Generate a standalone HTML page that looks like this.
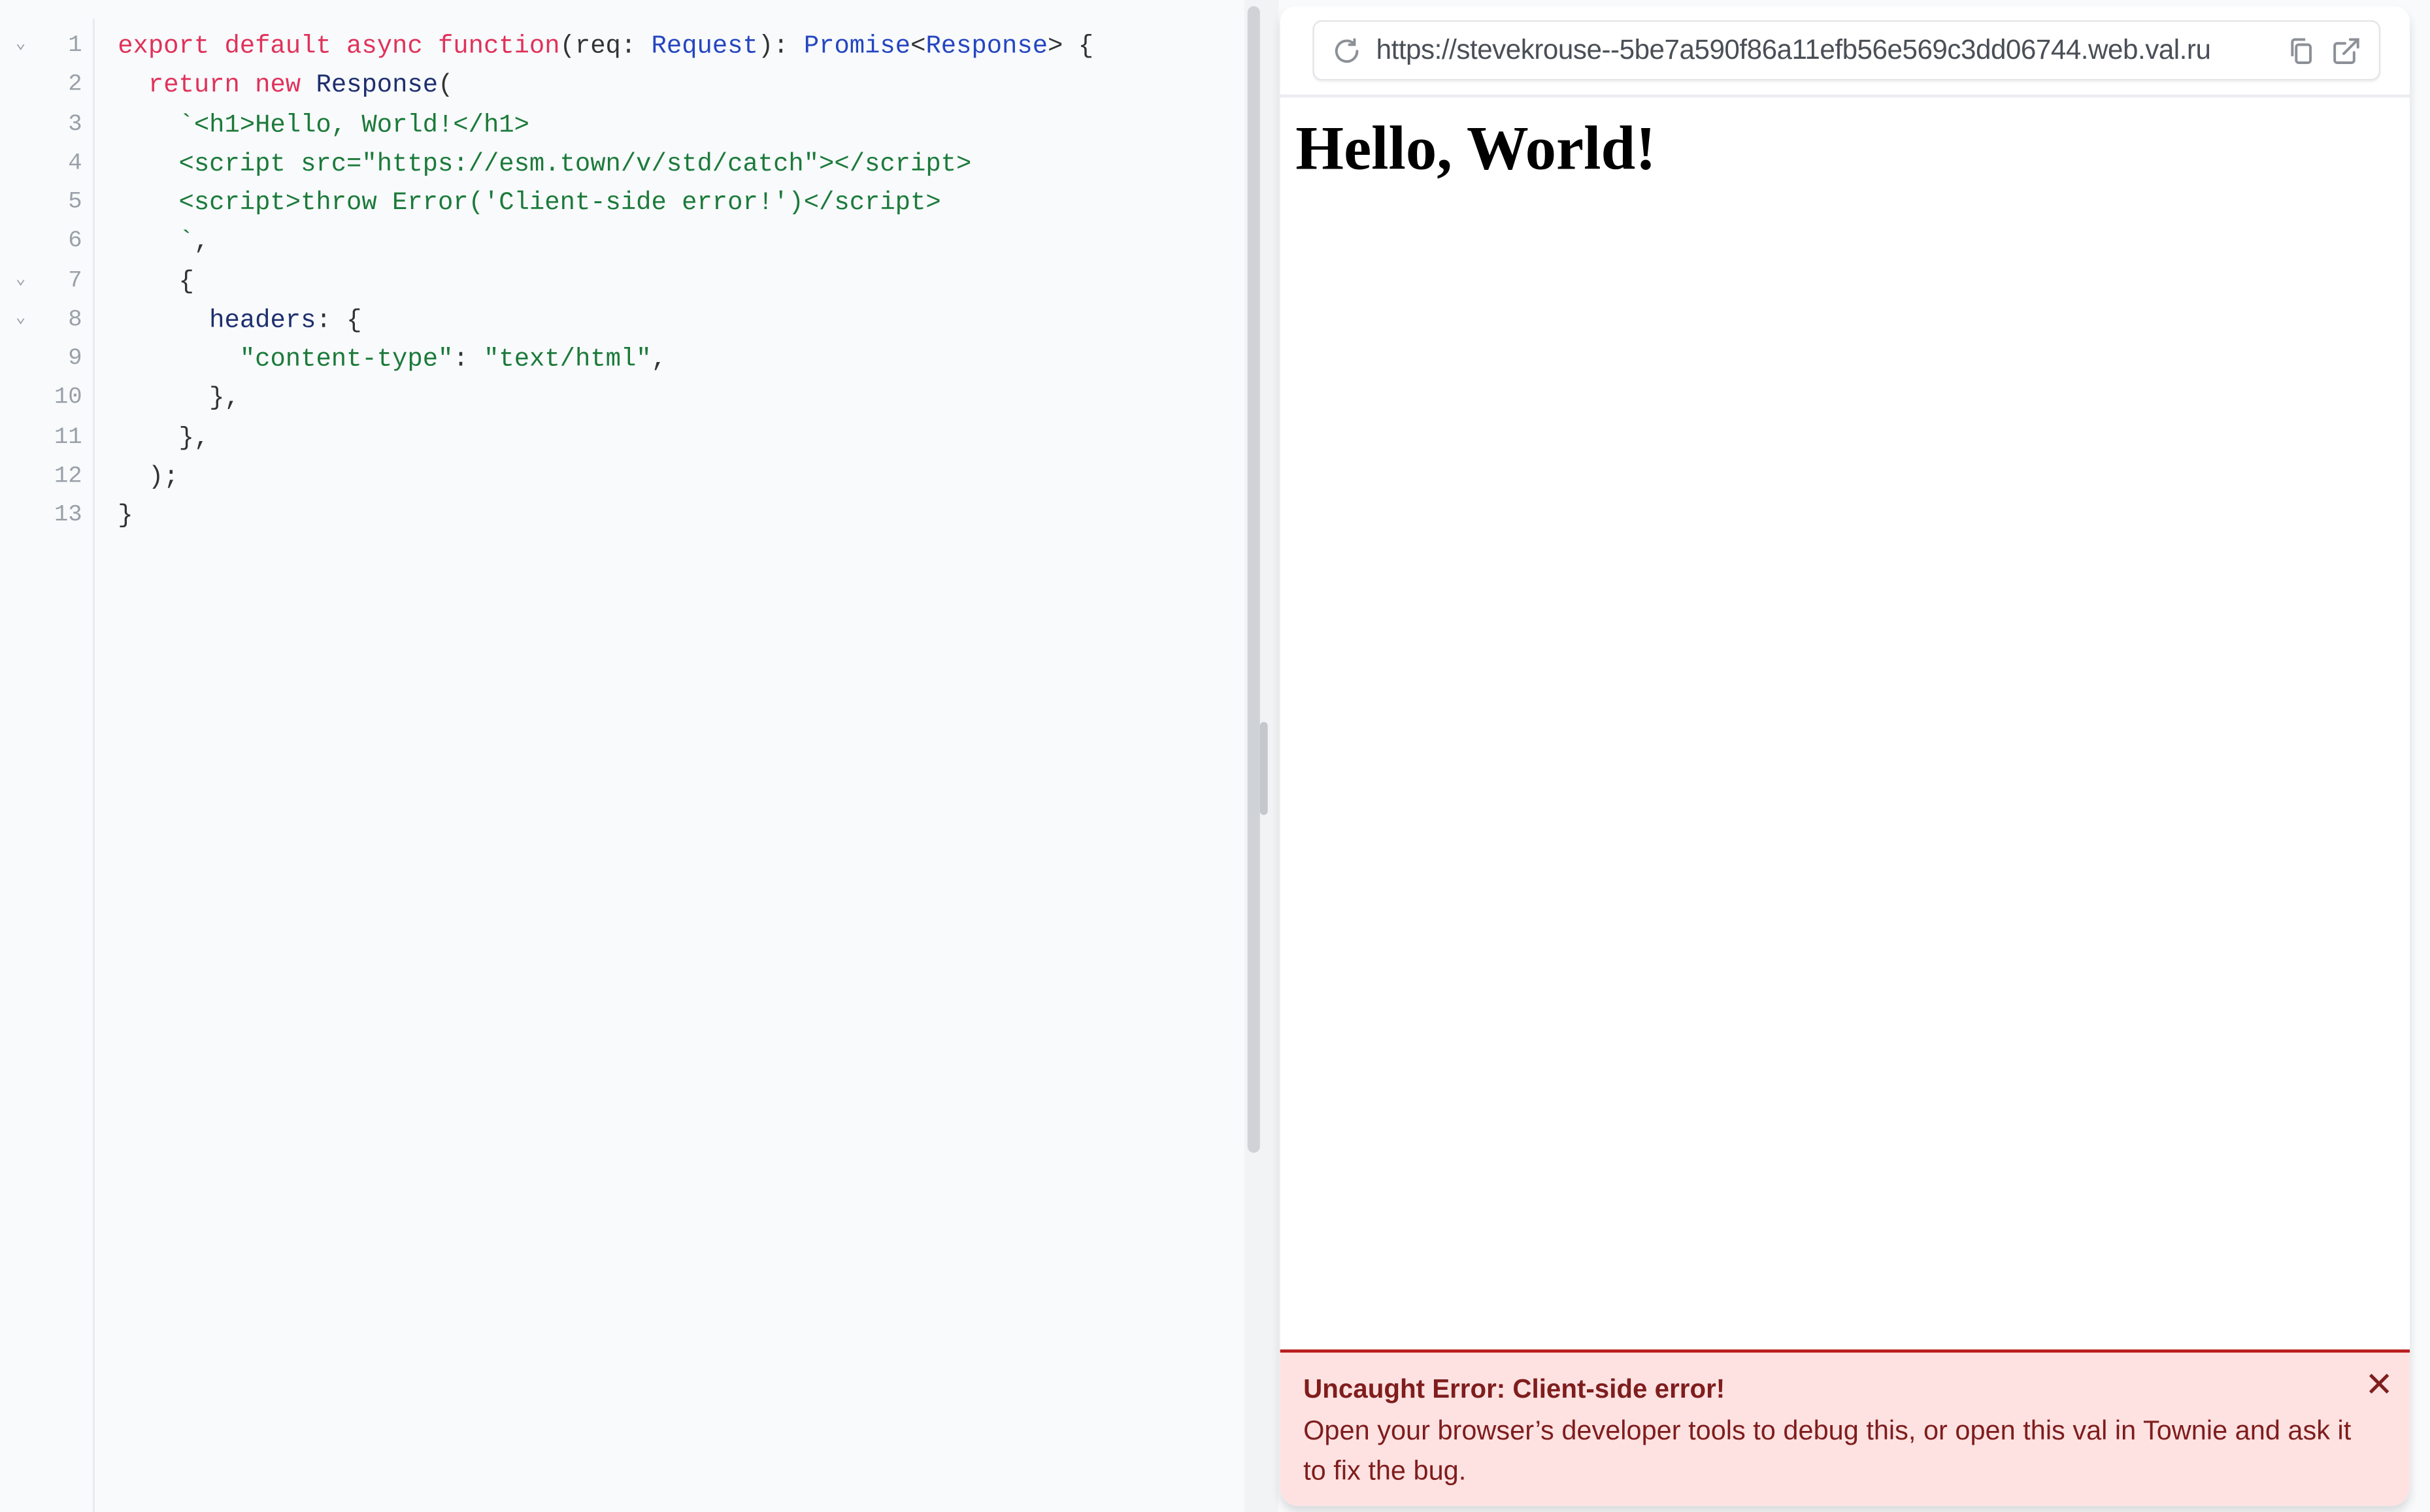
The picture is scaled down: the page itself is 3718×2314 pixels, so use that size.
<!DOCTYPE html>
<html><head><meta charset="utf-8"><style>
html,body{margin:0;padding:0;width:3718px;height:2314px;overflow:hidden;background:#f8fafc}
#w{position:absolute;left:0;top:0;width:1568px;height:976px;transform:scale(2.37117);transform-origin:0 0;background:#f8fafc}
.code{position:absolute;left:0;top:17px;font-family:"Liberation Mono",monospace;font-size:16.4px;line-height:25.25px}
.ln{position:absolute;left:0;width:53px;text-align:right;color:#9aa0a8;font-size:15px}
.cl{position:absolute;left:76px;white-space:pre}
.fold{position:absolute;left:10px;color:#9aa0a8;font-size:11px}
.k{color:#e0325a}.t{color:#2546c0}.n{color:#1e2f6e}.s{color:#1c7a3a}.p{color:#333}
</style></head><body><div id="w">
<div style="position:absolute;left:60px;top:12px;width:1px;height:964px;background:#e4e7eb"></div>
<div class="code"><div style="position:relative;height:329px"><div class="ln" style="top:0">1</div><div class="ln" style="top:25.25px">2</div><div class="ln" style="top:50.5px">3</div><div class="ln" style="top:75.75px">4</div><div class="ln" style="top:101px">5</div><div class="ln" style="top:126.25px">6</div><div class="ln" style="top:151.5px">7</div><div class="ln" style="top:176.75px">8</div><div class="ln" style="top:202px">9</div><div class="ln" style="top:227.25px">10</div><div class="ln" style="top:252.5px">11</div><div class="ln" style="top:277.75px">12</div><div class="ln" style="top:303px">13</div>
<div class="fold" style="top:0">⌄</div><div class="fold" style="top:151.5px">⌄</div><div class="fold" style="top:176.75px">⌄</div>
<div class="cl" style="top:0"><span class="k">export default async function</span><span class="p">(req: </span><span class="t">Request</span><span class="p">): </span><span class="t">Promise</span><span class="p">&lt;</span><span class="t">Response</span><span class="p">&gt; {</span></div>
<div class="cl" style="top:25.25px">  <span class="k">return new</span> <span class="n">Response</span><span class="p">(</span></div>
<div class="cl s" style="top:50.5px">    `&lt;h1&gt;Hello, World!&lt;/h1&gt;</div>
<div class="cl s" style="top:75.75px">    &lt;script src="https://esm.town/v/std/catch"&gt;&lt;/script&gt;</div>
<div class="cl s" style="top:101px">    &lt;script&gt;throw Error('Client-side error!')&lt;/script&gt;</div>
<div class="cl" style="top:126.25px"><span class="s">    `</span><span class="p">,</span></div>
<div class="cl p" style="top:151.5px">    {</div>
<div class="cl" style="top:176.75px">      <span class="n">headers</span><span class="p">: {</span></div>
<div class="cl" style="top:202px">        <span class="s">"content-type"</span><span class="p">: </span><span class="s">"text/html"</span><span class="p">,</span></div>
<div class="cl p" style="top:227.25px">      },</div>
<div class="cl p" style="top:252.5px">    },</div>
<div class="cl p" style="top:277.75px">  );</div>
<div class="cl p" style="top:303px">}</div>
</div></div>
<div style="position:absolute;left:803px;top:0;width:22px;height:976px;background:#f1f3f5"></div>
<div style="position:absolute;left:805px;top:4px;width:8px;height:740px;background:#cfd2d6;border-radius:4px"></div>
<div style="position:absolute;left:813px;top:466px;width:5px;height:60px;background:#c4c7cb;border-radius:3px"></div>
<div style="position:absolute;left:826px;top:4px;width:729px;height:968px;background:#fff;border-radius:10px 10px 12px 12px;overflow:hidden;box-shadow:0 4px 6px rgba(0,0,0,.12)">
 <div style="position:absolute;left:21px;top:9px;width:687px;height:37px;border:1px solid #e3e5e8;border-radius:6px;box-shadow:0 1px 1px rgba(0,0,0,.05)">
  <svg style="position:absolute;left:11px;top:9px" width="20" height="20" viewBox="0 0 24 24" fill="none" stroke="#8c9097" stroke-width="2" stroke-linecap="round"><path d="M20 12a8 8 0 1 1-2.5-5.8"/><path d="M18 3v4h-4"/></svg>
  <div style="position:absolute;left:40px;top:8px;font-family:'Liberation Sans',sans-serif;font-size:17.8px;color:#4a4f57;letter-spacing:-0.2px">https://stevekrouse--5be7a590f86a11efb56e569c3dd06744.web.val.ru</div>
  <svg style="position:absolute;left:627px;top:9px" width="20" height="20" viewBox="0 0 24 24" fill="none" stroke="#8c9097" stroke-width="2"><rect x="8" y="7" width="11" height="14" rx="2"/><path d="M5 16V5a2 2 0 0 1 2-2h8"/></svg>
  <svg style="position:absolute;left:656px;top:9px" width="20" height="20" viewBox="0 0 24 24" fill="none" stroke="#8c9097" stroke-width="2" stroke-linecap="round"><path d="M18 13v6a2 2 0 0 1-2 2H5a2 2 0 0 1-2-2V8a2 2 0 0 1 2-2h6"/><path d="M15 3h6v6M10 14 21 3"/></svg>
 </div>
 <div style="position:absolute;left:0;top:57px;width:729px;height:2px;background:#eceef0"></div>
 <div style="position:absolute;left:10px;top:68px;font-family:'Liberation Serif',serif;font-weight:bold;font-size:40px;color:#000">Hello, World!</div>
 <div style="position:absolute;left:0;top:867px;width:729px;height:101px;background:#fee2e2;border-top:2px solid #b91c1c;font-family:'Liberation Sans',sans-serif;color:#7f1d1d">
  <div style="position:absolute;left:15px;top:14px;font-weight:bold;font-size:17px">Uncaught Error: Client-side error!</div>
  <div style="position:absolute;left:15px;top:38px;width:695px;font-size:17.5px;line-height:25.5px">Open your browser’s developer tools to debug this, or open this val in Townie and ask it to fix the bug.</div>
  <div style="position:absolute;left:700px;top:8px;font-size:22px">✕</div>
 </div>
</div>
</div></body></html>
